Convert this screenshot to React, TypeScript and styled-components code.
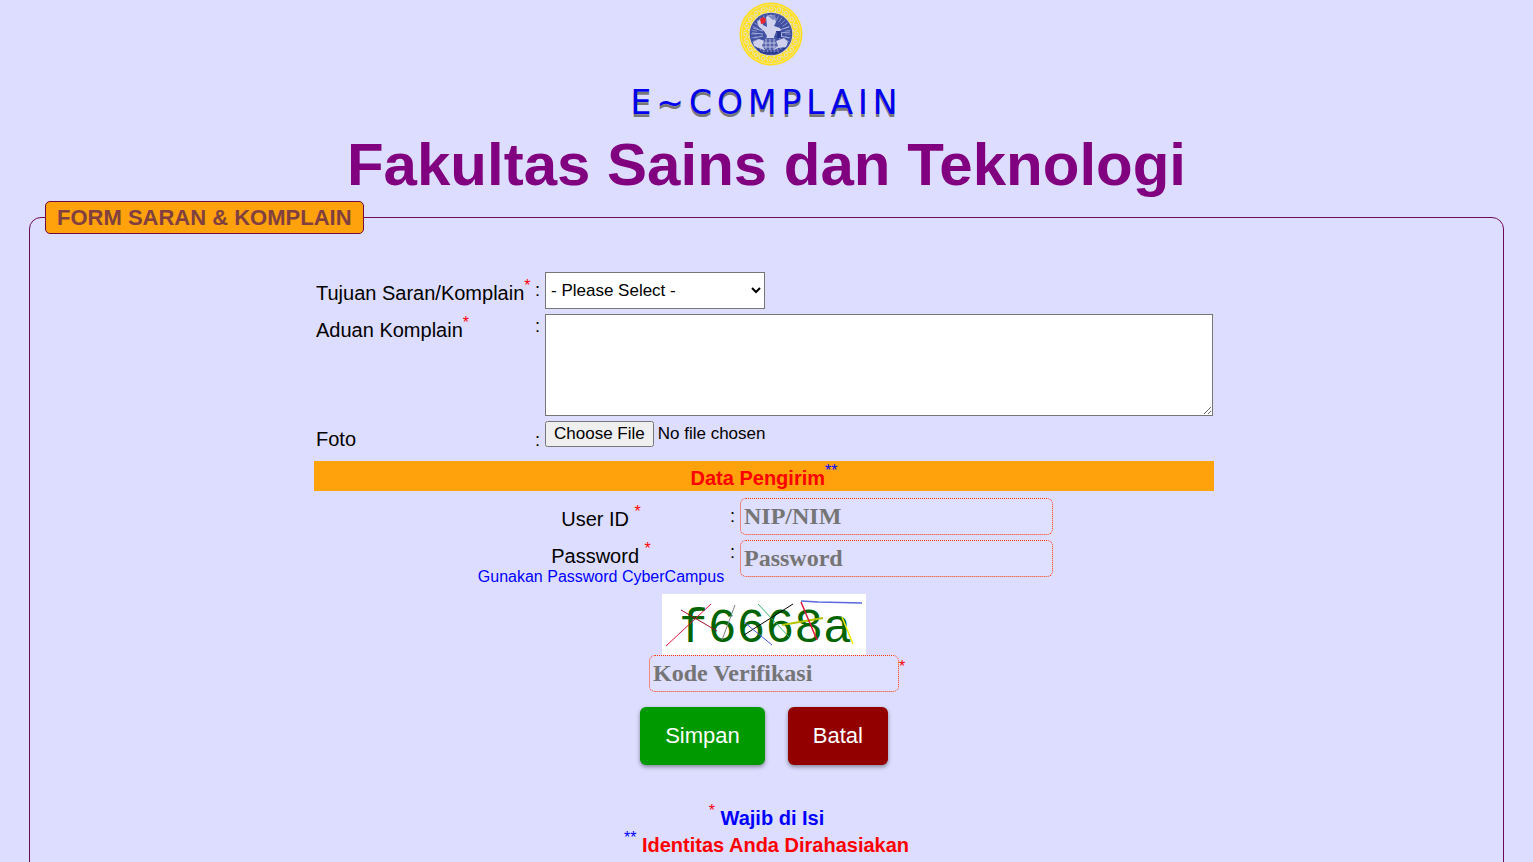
import React from "react";
import styled, { createGlobalStyle } from "styled-components";

const GlobalStyle = createGlobalStyle`
  html { scrollbar-width: none; }
  body {
    margin: 0;
    background: #ddddff;
    color: #000;
    font-family: "Liberation Sans", Arial, sans-serif;
    font-size: 20px;
    line-height: 24px;
  }
  * { box-sizing: border-box; }
`;

const Header = styled.header`
  display: flex;
  flex-direction: column;
  align-items: center;
  padding: 2px 0;
  text-align: center;
`;

const LogoSvg = styled.svg`
  display: block;
  width: 64px;
  height: 64px;
  margin-left: 8px;
`;

const Brand = styled.p`
  margin: 18px 0 8px;
  font-family: Verdana, "DejaVu Sans", sans-serif;
  font-size: 33px;
  line-height: 38px;
  letter-spacing: 5px;
  color: #0000ee;
  text-shadow: 0 3px 0 #777;
`;

const Title = styled.h1`
  margin: 0;
  font-size: 60px;
  line-height: 69px;
  font-weight: bold;
  color: #800080;
`;

const Panel = styled.fieldset`
  margin: 0 29px;
  padding: 38px 15px 60px;
  border: 1px solid #700a58;
  border-radius: 12px;
  min-width: 0;
`;

const PanelTitle = styled.legend`
  padding: 0 11px;
  border: 1px solid #700a40;
  border-radius: 5px;
  background: #ffa20c;
  color: #804040;
  font-size: 22px;
  line-height: 31px;
  font-weight: bold;
`;

const Body = styled.div`
  max-width: 900px;
  margin: 0 auto;
`;

const Shell = styled.div`
  padding-right: 5px;
`;

const Fields = styled.div`
  display: grid;
  grid-template-columns: 221px 10px minmax(0, 1fr);
  row-gap: 5px;
  align-items: start;
  padding-right: 1px;
`;

const SenderFields = styled.div`
  display: grid;
  grid-template-columns: 256px 10px 314px;
  row-gap: 5px;
  justify-content: center;
  align-items: start;
  margin-top: 7px;
`;

const Label = styled.label<{ $top: number; $center?: boolean }>`
  padding: ${(p) => (p.$center ? `${p.$top}px 2px 0 0` : `${p.$top}px 0 0 2px`)};
  text-align: ${(p) => (p.$center ? "center" : "left")};
  white-space: nowrap;
`;

const Colon = styled.span<{ $top: number }>`
  padding-top: ${(p) => p.$top}px;
  font-size: 18px;
  line-height: 20px;
`;

const Mark = styled.sup<{ $blue?: boolean }>`
  color: ${(p) => (p.$blue ? "#0000ff" : "#ff0000")};
  font-size: 16px;
  line-height: 0;
  font-weight: normal;
  vertical-align: 9px;
`;

const CodeMark = styled(Mark)`
  line-height: 24px;
`;

const Hint = styled.small`
  display: block;
  color: #0000ff;
  font-size: 16px;
  line-height: 18px;
`;

const Select = styled.select`
  width: 220px;
  height: 37px;
  padding: 0 1px;
  border: 1px solid #767676;
  background: #fff;
  color: #000;
  font-family: inherit;
  font-size: 17px;
`;

const TextArea = styled.textarea`
  display: block;
  width: 100%;
  height: 102px;
  border: 1px solid #767676;
  font-family: inherit;
  font-size: 17px;
`;

const FileInput = styled.input`
  display: block;
  height: 35px;
  font-family: inherit;
  font-size: 17px;
  line-height: 19px;
  &::file-selector-button { padding: 1px 7px; }
`;

const Band = styled.h2`
  margin: 5px 0 0;
  padding: 5px 0 1px;
  background: #ffa20c;
  color: #ff0000;
  font-size: 20px;
  line-height: 24px;
  text-align: center;
`;

const Field = styled.input<{ $width: number }>`
  display: block;
  width: ${(p) => p.$width}px;
  height: 37px;
  padding: 0 3px;
  border: 1px dotted #ff3300;
  border-radius: 6px;
  background: #dfdfff;
  font-family: "Liberation Serif", serif;
  font-size: 24px;
  font-weight: bold;
  &::placeholder { color: #757575; opacity: 1; }
`;

const Verification = styled.div`
  display: flex;
  flex-direction: column;
  align-items: center;
  margin-top: 8px;
`;

const CaptchaSvg = styled.svg`
  display: block;
  width: 204px;
  height: 61px;
  background: #fff;
  overflow: visible;
`;

const CodeRow = styled.div`
  display: flex;
  align-items: start;
  padding-left: 26px;
  width: 282px;
`;

const Actions = styled.div`
  display: flex;
  justify-content: center;
  gap: 23px;
  margin-top: 15px;
`;

const Action = styled.button<{ $color: string }>`
  height: 58px;
  padding: 0 25px;
  border: 0;
  border-radius: 6px;
  background: ${(p) => p.$color};
  color: #fff;
  font-family: inherit;
  font-size: 22px;
  box-shadow: 0 2px 4px rgba(0, 0, 0, 0.4);
`;

const Notes = styled.div`
  margin-top: 40px;
  font-weight: bold;
  text-align: center;
`;

const Note = styled.p<{ $color: string }>`
  margin: 0;
  color: ${(p) => p.$color};
  line-height: 27px;
`;

function Logo() {
  const rays = Array.from({ length: 32 }, (_, i) => i * 11.25);
  const beads = Array.from({ length: 20 }, (_, i) => i * 18);
  return (
    <LogoSvg viewBox="0 0 64 64" role="img" aria-label="Universitas Airlangga">
      <circle cx="32" cy="32" r="31.5" fill="#ffdf1c" />
      <circle cx="32" cy="32" r="29.5" fill="none" stroke="#ece6b0" strokeWidth="0.8" />
      {beads.map((a) => (
        <g key={a} transform={`rotate(${a} 32 32)`}>
          <circle cx="32" cy="6.4" r="1.8" fill="none" stroke="#e6e2c4" strokeWidth="1" />
          <path d="M35 4.5l2 4M35 9.5h2" stroke="#e6e2c4" strokeWidth="1" />
        </g>
      ))}
      <circle cx="32" cy="32" r="22.2" fill="#e6e0b8" />
      <circle cx="32" cy="32" r="21.3" fill="#4150a0" />
      {rays.map((a) => (
        <path key={a} d="M32 18V12" transform={`rotate(${a} 32 32)`} stroke="#8e98d0" strokeWidth="0.8" />
      ))}
      <path d="M14 26l10 3M13 31l11 1M15 36l9-2M50 25l-10 3M51 30l-11 1M50 36l-9-2" stroke="#a5addc" strokeWidth="1" />
      <path
        d="M27 15q5-4 9 0l1 5-2 4 6 2 2 7-2 4-3-3-1-4-2 5 2 4 8-3 4 4-2 5-8 1-4 2H25l-5-2-5-2-1-4 6-3 6 2 2-5-3-5-5-4-2-5 3-3 2 3 1 3 4 2z"
        fill="#cfd1ed"
      />
      <path d="M26 36h10l3 8-5 4h-8l-3-4z" fill="#5562ab" />
      <path d="M27 37v10M31 37v11M35 37v10M24 41h13M23 45h15" stroke="#cfd1ed" strokeWidth="0.8" />
      <path d="M18 47l5 4M40 50l6-4M24 51h15" stroke="#26358b" strokeWidth="1.5" />
      <path d="M37 29h5v7h-4z" fill="#27368d" />
      <path d="M29 14l6-1 3 4-4 1z" fill="#7d88c4" />
      <path d="M21 17l3-2 3 2-1 4-4 1z" fill="#ec2630" />
    </LogoSvg>
  );
}

function Captcha() {
  return (
    <CaptchaSvg viewBox="0 0 204 61" role="img" aria-label="Kode verifikasi f6668a">
      <text
        x="17"
        y="48"
        fill="#006400"
        fontFamily="'Liberation Mono', monospace"
        fontSize="48"
      >
        f6668a
      </text>
      <g fill="none" strokeWidth="1">
        <path d="M4 52L49 10" stroke="#dc143c" />
        <path d="M19 16L55 37" stroke="#a01030" />
        <path d="M73 11L60 46" stroke="#808080" />
        <path d="M96 10L128 44" stroke="#3cb371" />
        <path d="M131 10L82 41" stroke="#000" />
        <path d="M82 28L110 51" stroke="#4a58d0" />
        <path d="M120 31L161 24" stroke="#b5c400" strokeWidth="2" />
        <path d="M139 8L155 46" stroke="#dc143c" strokeWidth="1.5" />
        <path d="M139 7L156 8 200 9" stroke="#5a68dc" strokeWidth="1.5" />
        <path d="M180 23L191 50" stroke="#f5e800" strokeWidth="1.5" />
      </g>
    </CaptchaSvg>
  );
}

export default function App() {
  return (
    <>
      <GlobalStyle />
      <Header>
        <Logo />
        <Brand>E~COMPLAIN</Brand>
        <Title>Fakultas Sains dan Teknologi</Title>
      </Header>
      <form onSubmit={(e) => e.preventDefault()}>
        <Panel>
          <PanelTitle>FORM SARAN &amp; KOMPLAIN</PanelTitle>
          <Shell>
            <Body>
              <Fields>
                <Label $top={9} htmlFor="tujuan">
                  Tujuan Saran/Komplain<Mark>*</Mark>
                </Label>
                <Colon $top={8}>:</Colon>
                <Select id="tujuan">
                  <option>- Please Select -</option>
                </Select>

                <Label $top={4} htmlFor="aduan">
                  Aduan Komplain<Mark>*</Mark>
                </Label>
                <Colon $top={2}>:</Colon>
                <TextArea id="aduan" />

                <Label $top={6} htmlFor="foto">Foto</Label>
                <Colon $top={9}>:</Colon>
                <FileInput id="foto" type="file" />
              </Fields>

              <Band>
                Data Pengirim<Mark $blue>**</Mark>
              </Band>

              <SenderFields>
                <Label $top={9} $center htmlFor="userid">
                  User ID <Mark>*</Mark>
                </Label>
                <Colon $top={8}>:</Colon>
                <Field $width={313} id="userid" type="text" placeholder="NIP/NIM" />

                <Label $top={4} $center htmlFor="password">
                  Password <Mark>*</Mark>
                  <Hint>Gunakan Password CyberCampus</Hint>
                </Label>
                <Colon $top={2}>:</Colon>
                <Field $width={313} id="password" type="password" placeholder="Password" />
              </SenderFields>

              <Verification>
                <Captcha />
                <CodeRow>
                  <Field $width={250} type="text" aria-label="Kode Verifikasi" placeholder="Kode Verifikasi" />
                  <CodeMark>*</CodeMark>
                </CodeRow>
              </Verification>

              <Actions>
                <Action $color="#009900" type="submit">Simpan</Action>
                <Action $color="#930000" type="reset">Batal</Action>
              </Actions>
            </Body>
          </Shell>

          <Notes>
            <Note $color="#0000ff"><Mark>*</Mark> Wajib di Isi</Note>
            <Note $color="#ff0000"><Mark $blue>**</Mark> Identitas Anda Dirahasiakan</Note>
          </Notes>
        </Panel>
      </form>
    </>
  );
}
